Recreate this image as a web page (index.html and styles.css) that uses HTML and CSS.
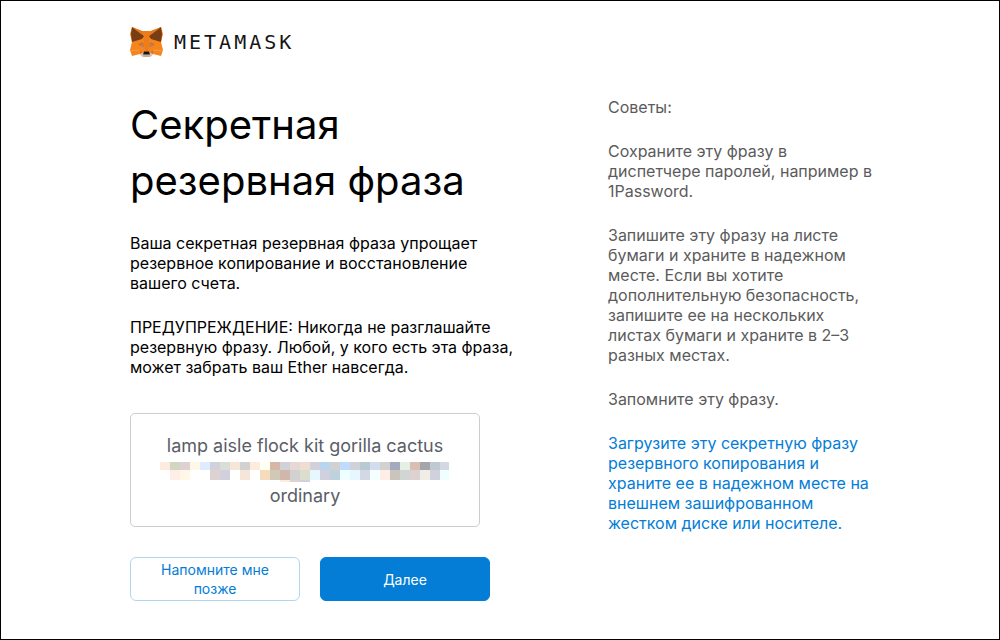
FILE: index.html
```
<!DOCTYPE html>
<html lang="ru">
<head>
<meta charset="utf-8">
<meta name="viewport" content="width=device-width, initial-scale=1">
<title>MetaMask</title>
<link rel="stylesheet" href="styles.css">
</head>
<body>
<div class="page">
  <header class="brand">
    <svg class="fox" viewBox="0 0 33 31" aria-hidden="true">
      <path fill="#f6851b" d="M2 0 L12 4 H21 L31 0 L33 7 L31 15 L33 23 L31 29 L23 27 L20 30 H13 L10 27 L2 29 L0 23 L2 15 L0 7Z"/>
      <path fill="#ee7c1a" d="M12 4 L14 14 L15 24 H18 L19 14 L21 4Z"/>
      <path fill="#763d16" d="M2 0 L14 9 L12 12 L2 15 L1 7Z M31 0 L19 9 L21 12 L31 15 L32 7Z"/>
      <path fill="#e4761b" d="M2 0 L12 4 L14 9Z M31 0 L21 4 L19 9Z"/>
      <path fill="#f09a50" d="M0 23 H9 L10 24 H1Z M33 23 H24 L23 24 H32Z"/>
      <path fill="#d9702a" d="M8 17 L13 15 L14 20 L10 19Z M25 17 L20 15 L19 20 L23 19Z M10 27 L10 23 L13 26Z M23 27 L23 23 L20 26Z"/>
      <path fill="#8595a5" d="M10 18 H13 L13 20 L11 19Z M23 18 H20 L20 20 L22 19Z"/>
      <path fill="#d7c1b3" d="M10 27 L14 25 H19 L23 27 L20 30 H13Z"/>
      <path fill="#161616" d="M14 24.500 H19 L20 27.500 H13Z"/>
      <path fill="#c0ad9e" d="M13 28 H20 L19 30 H14Z"/>
    </svg>
    <span class="brand-name">METAMASK</span>
  </header>
  <main class="columns">
    <section class="main">
      <h1>Секретная<br>резервная фраза</h1>
      <p>Ваша секретная резервная фраза упрощает<br>резервное копирование и восстановление<br>вашего счета.</p>
      <p>ПРЕДУПРЕЖДЕНИЕ: Никогда не разглашайте<br>резервную фразу. Любой, у кого есть эта фраза,<br>может забрать ваш Ether навсегда.</p>
      <div class="phrase">
        <span>lamp aisle flock kit gorilla cactus</span>
        <svg class="mosaic" viewBox="0 0 290 20" shape-rendering="crispEdges" aria-hidden="true">
          <path fill="#fdecdd" d="M0 0h10v8H0zM90 0h10v8H90zM120 18h10v2H120z"/>
          <path fill="#d2d5c0" d="M10 0h10v8H10z"/>
          <path fill="#ddd1d1" d="M20 0h10v8H20zM50 8h10v10H50zM130 18h10v2H130zM250 8h10v10H250z"/>
          <path fill="#fff8e6" d="M30 0h10v8H30zM20 8h10v10H20z"/>
          <path fill="#dcedff" d="M40 0h10v8H40z"/>
          <path fill="#d1d1d9" d="M50 0h10v8H50zM120 0h10v8H120zM150 0h10v8H150zM190 0h10v8H190z"/>
          <path fill="#dbddd8" d="M60 0h10v8H60z"/>
          <path fill="#f5e6d8" d="M70 0h10v8H70zM80 8h10v10H80z"/>
          <path fill="#d1d1d1" d="M80 0h10v8H80zM170 0h10v8H170zM220 0h10v8H220zM130 8h10v10H130z"/>
          <path fill="#fffff2" d="M100 0h10v8H100z"/>
          <path fill="#d6b6a4" d="M110 0h10v8H110z"/>
          <path fill="#e6d8d4" d="M130 0h10v8H130z"/>
          <path fill="#efddd1" d="M140 0h10v8H140z"/>
          <path fill="#b7d5ef" d="M160 0h10v8H160z"/>
          <path fill="#bddcff" d="M180 0h10v8H180z"/>
          <path fill="#b7c9d1" d="M200 0h10v8H200z"/>
          <path fill="#d1ddee" d="M210 0h10v8H210z"/>
          <path fill="#a4aabf" d="M230 0h10v8H230z"/>
          <path fill="#e6efe6" d="M240 0h10v8H240z"/>
          <path fill="#d8bfb2" d="M250 0h10v8H250z"/>
          <path fill="#a4a4aa" d="M260 0h10v8H260z"/>
          <path fill="#bfc9d1" d="M270 0h10v8H270z"/>
          <path fill="#d4d8e4" d="M280 0h9v8H280zM200 8h10v10H200z"/>
          <path fill="#ffeee6" d="M10 8h10v10H10zM220 8h10v10H220z"/>
          <path fill="#d1d1dd" d="M60 8h10v10H60zM160 8h10v10H160zM270 8h10v10H270zM140 18h10v2H140z"/>
          <path fill="#f6dcbd" d="M100 8h10v10H100z"/>
          <path fill="#d1c9b7" d="M110 8h10v10H110z"/>
          <path fill="#d1b7a9" d="M120 8h10v10H120z"/>
          <path fill="#dbdecf" d="M140 8h10v10H140z"/>
          <path fill="#e6f7ff" d="M150 8h10v10H150zM190 8h10v10H190z"/>
          <path fill="#bfd1dd" d="M170 8h10v10H170z"/>
          <path fill="#eeffff" d="M180 8h10v10H180zM280 8h9v10H280z"/>
          <path fill="#f6ffff" d="M210 8h10v10H210z"/>
          <path fill="#cac4bd" d="M230 8h10v10H230z"/>
          <path fill="#d1d6d3" d="M240 8h10v10H240z"/>
          <path fill="#efeee6" d="M260 8h10v10H260z"/>
        </svg>
        <span>ordinary</span>
      </div>
      <div class="actions">
        <button class="button secondary" type="button">Напомните мне<br>позже</button>
        <button class="button primary" type="button">Далее</button>
      </div>
    </section>
    <aside class="tips">
      <p>Советы:</p>
      <p>Сохраните эту фразу в<br>диспетчере паролей, например в<br>1Password.</p>
      <p>Запишите эту фразу на листе<br>бумаги и храните в надежном<br>месте. Если вы хотите<br>дополнительную безопасность,<br>запишите ее на нескольких<br>листах бумаги и храните в 2–3<br>разных местах.</p>
      <p>Запомните эту фразу.</p>
      <p><a href="#download">Загрузите эту секретную фразу<br>резервного копирования и<br>храните ее в надежном месте на<br>внешнем зашифрованном<br>жестком диске или носителе.</a></p>
    </aside>
  </main>
</div>
</body>
</html>
```
FILE: styles.css
```
* {
  box-sizing: border-box;
}

body {
  margin: 0;
  background: #fff;
  color: #000;
  font-family: Inter, "Open Sans", sans-serif;
  font-size: 16px;
  line-height: 20px;
}

.page {
  min-height: 100vh;
  border: 1px solid #000;
  padding: 25px 12% 38px 129px;
}

.brand {
  display: flex;
  align-items: center;
  gap: 11px;
  height: 32px;
}

.fox {
  width: 33px;
  height: 31px;
}

.brand-name {
  color: #161616;
  font-family: "DejaVu Sans Mono", monospace;
  font-size: 20px;
  letter-spacing: 3px;
}

.columns {
  display: grid;
  grid-template-columns: 380px minmax(0, 1fr);
  gap: 98px;
  padding-top: 39px;
}

h1 {
  margin: 0 0 24px;
  font-size: 40px;
  font-weight: 400;
  line-height: 56px;
}

p {
  margin: 0 0 24px;
  white-space: nowrap;
}

.phrase {
  display: flex;
  flex-direction: column;
  align-items: center;
  width: 350px;
  margin-top: 36px;
  padding: 19px 19px 17px;
  border: 1px solid #cdcdcd;
  border-radius: 5px;
  color: #5b5d67;
  font-size: 18px;
  line-height: 26px;
}

.mosaic {
  width: 290px;
  height: 20px;
  margin: 3px 0 1px;
}

.actions {
  display: flex;
  gap: 20px;
  margin-top: 30px;
}

.button {
  width: 170px;
  height: 44px;
  padding: 0;
  border: 1px solid #037dd6;
  border-radius: 6px;
  font-family: inherit;
  font-size: 14px;
  line-height: 19px;
}

.secondary {
  border-color: #b0d7f2;
  background: #fff;
  color: #037dd6;
}

.primary {
  background: #037dd6;
  color: #fff;
}

.tips {
  color: #5b5b5b;
}

.tips a {
  color: #037dd6;
  text-decoration: none;
}
```
